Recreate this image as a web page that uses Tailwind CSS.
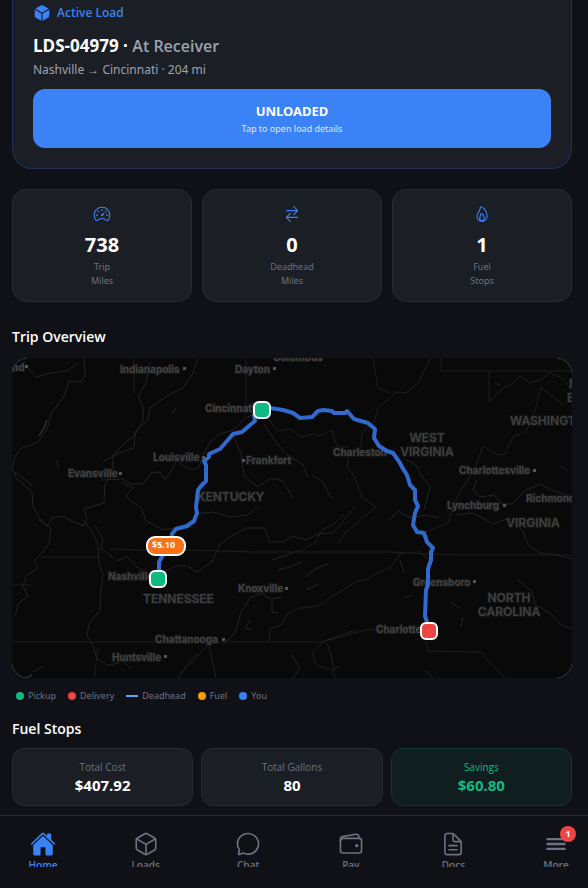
<!DOCTYPE html>
<html lang="en">
<head>
    <meta charset="UTF-8">
    <meta name="viewport" content="width=device-width, initial-scale=1">
    <title>Driver Home</title>
    <script src="https://cdn.jsdelivr.net/npm/@tailwindcss/browser@4"></script>
</head>
<body class="min-h-screen bg-[#101116] text-white font-['Open_Sans','Noto_Sans',sans-serif]">

<main class="pr-4 pb-20 pl-3">
    <!-- Active load -->
    <section class="rounded-b-[20px] border border-t-0 border-[#1f3255] bg-[#1b1e25] px-5 pt-1 pb-5">
        <div class="flex items-center gap-1.5 h-[18px] text-[#3b82f6]">
            <svg class="size-[18px]" viewBox="0 0 512 512" fill="currentColor"><path d="M440.9 136.3a4 4 0 000-6.91L288.16 40.65a64.14 64.14 0 00-64.33 0L71.12 129.39a4 4 0 000 6.91L254 243.88a4 4 0 004.06 0zM238 270.81L54 163.48a4 4 0 00-6 3.46v173.92a48 48 0 0023.84 41.39L234 479.48a4 4 0 006-3.46V274.27a4 4 0 00-2-3.46zM274 270.81a4 4 0 00-2 3.46V476a4 4 0 006 3.46l162.15-97.23A48 48 0 00464 340.86V167a4 4 0 00-6-3.46z"/></svg>
            <span class="text-[12px] font-semibold">Active Load</span>
        </div>
        <h1 class="mt-3 text-[17px] leading-6 font-bold">LDS-04979 · <span class="text-[16px] font-semibold text-[#9ca3af]">At Receiver</span></h1>
        <p class="font-['Noto_Sans',sans-serif] text-[12px] leading-[23px] text-[#9ca3af]">Nashville → Cincinnati · 204 mi</p>
        <button class="mt-2 flex h-[59px] w-full flex-col items-center justify-center rounded-xl bg-[#3b82f6]">
            <span class="font-['Noto_Sans',sans-serif] text-[13px] leading-5 font-bold">UNLOADED</span>
            <span class="font-['Noto_Sans',sans-serif] text-[9px] leading-4 text-white/80">Tap to open load details</span>
        </button>
    </section>

    <!-- Stats -->
    <section class="mt-5 grid grid-cols-3 gap-2.5 text-center">
        <div class="flex flex-col items-center rounded-[14px] border border-[#282b31] bg-[#1b1e25] pt-[15px] pb-[13px]">
            <svg class="size-[18px] text-[#3b82f6]" viewBox="0 0 512 512" fill="none" stroke="currentColor" stroke-width="32" stroke-linecap="round" stroke-linejoin="round"><path fill="currentColor" stroke="none" d="M326.1 231.9l-47.5 75.5a31 31 0 01-7 7 30.11 30.11 0 01-35-49l75.5-47.5a10.23 10.23 0 0111.7 0 10.06 10.06 0 012.3 14z"/><path d="M256 64C132.3 64 32 164.2 32 287.9a223.18 223.18 0 0056.3 148.5c1.1 1.2 2.1 2.4 3.2 3.5a25.19 25.19 0 0037.1-.1 173.13 173.13 0 01254.8 0 25.19 25.19 0 0037.1.1l3.2-3.5A223.18 223.18 0 00480 287.9C480 164.2 379.7 64 256 64zM256 128v32M416 288h-32M128 288H96M165.49 197.49l-22.63-22.63M346.51 197.49l22.63-22.63"/></svg>
            <b class="mt-2 mb-px text-[20px] leading-7 font-bold">738</b>
            <span class="font-['Noto_Sans',sans-serif] text-[9px] leading-[14px] text-[#6b7280]">Trip<br>Miles</span>
        </div>
        <div class="flex flex-col items-center rounded-[14px] border border-[#282b31] bg-[#1b1e25] pt-[15px] pb-[13px]">
            <svg class="size-[18px] text-[#3b82f6]" viewBox="0 0 512 512" fill="none" stroke="currentColor" stroke-width="32" stroke-linecap="round" stroke-linejoin="round"><path d="M304 48l112 112-112 112M398.87 160H96M208 464L96 352l112-112M114 352h302"/></svg>
            <b class="mt-2 mb-px text-[20px] leading-7 font-bold">0</b>
            <span class="font-['Noto_Sans',sans-serif] text-[9px] leading-[14px] text-[#6b7280]">Deadhead<br>Miles</span>
        </div>
        <div class="flex flex-col items-center rounded-[14px] border border-[#282b31] bg-[#1b1e25] pt-[15px] pb-[13px]">
            <svg class="size-[18px] text-[#3b82f6]" viewBox="0 0 512 512" fill="none" stroke="currentColor" stroke-width="32" stroke-linecap="round" stroke-linejoin="round"><path d="M112 320c0-93 124-165 96-272 66 0 192 96 192 272a144 144 0 01-288 0z"/><path d="M320 368c0 57.71-32 80-64 80s-64-22.29-64-80 40-86 32-128c42 0 96 70.29 96 128z"/></svg>
            <b class="mt-2 mb-px text-[20px] leading-7 font-bold">1</b>
            <span class="font-['Noto_Sans',sans-serif] text-[9px] leading-[14px] text-[#6b7280]">Fuel<br>Stops</span>
        </div>
    </section>

    <!-- Trip map -->
    <h2 class="mt-[25px] text-[14px] leading-5 font-semibold">Trip Overview</h2>
    <div class="mt-[11px] h-80 overflow-hidden rounded-2xl bg-[#dddddd]">
        <svg class="block h-full w-full bg-[#090909] font-[Inter,'Open_Sans',sans-serif]" viewBox="12 358 560 320" preserveAspectRatio="xMidYMid slice">
            <!-- state borders -->
            <g fill="none" stroke="#1f1f1f" stroke-width="1">
                <path d="M134 358v36M246 358v52M441 358v13h131M489 371v31M12 585h20M40 557h60M110 549l34 1 46 0 62 2 136 0 70 3 114 0M12 642h80l96 0 130 0 7-1 40-11 64-1M98 648l-4 30M209 645l7 33M428 651l52 1 25 26"/>
                <path d="M489 402l15-15 8-3 8-8 10 7 10-3 10-7 10 4 8 8 4 10M541 387l22 18M541 387l-5 20-10 25-13 5-8 17-7 1-15-9-8 22-14 22-9 18-3 14-11 5-12 5-4-3M388 400l8-8 10 1 12-10 8-16 5-9"/>
                <path d="M269 642l1-13 11-4 7-12 13-5 17-2 15-10 13-8 11-7 9-1 9-6 15-6 10-14 4 0M324 641l-12 12 4 12 17 6 2 7M324 641l20-7 12-4M426 641l2 10M298 552l17-9 7-13 12-6 10-10"/>
                <path d="M373 358l5 30 12 5M388 400l-10 8-4 14-12 10-1 15-12 7-2 12 8 12 7 19 14 10-30 25-8 12M349 447l-12 0-5-17-12 6-8-2-10 3-12-8-13 2-11-15"/>
            </g>
            <!-- rivers and lakes -->
            <g fill="none" stroke="#242424" stroke-width="1" stroke-linejoin="round">
                <path d="M84 358l1 18-4 6-12-1-5 15-13 18-4 16-10 13-15 5-7 8-3 12 4 10 16 14 1 15 7 12 7 7 5-8 10-2 10 5 12 5 3-7-3-10 20-6 1-20 8-9 0-19 12-12 10-8 8-14 0-14-5-10 8-14 4-21M20 365l8 3 8 9 14-4 17-2 11-8"/>
                <path d="M198 358l-6 17-9 13-15 7-18 13-2 12-13 12-1 16-17 6-14 8M101 480l22-1 8 5 12 0 8-11 9-1 5 8 8-12 4-8 8 7 8 3 6-3 4-12 8-14 8-7 15-4 11-12 7-3"/>
                <path d="M121 482l12 6-8 8 17 13 4 12 18 9 16-3 14 0M234 437l7 17 3 22 14 11 13-9 12 3 10 17M264 424l9 14 12 15 18 12 5 12M312 475l10 6 10 18M12 470l20 15M39 520l12 8-2 16-8 10-7 7 4 7-12 8-3 10 5 10-9 7-4 13M83 520l8 10 7 14 1 20 4 10-2 16-1 20-11 14-2 12 6 10 4 12 11 8 15-5 9 8M95 525l8 14-2 9 16 13 10-5 10 11 9 5M165 572l10-6 12 0 10 6 15-10 8-18 13-9 14-7 18 0 4 14 14 0 9-6 14 4 12-6 15-1 10-12 12-14"/>
                <path d="M190 665l12-14 8-8M178 678l11-16 8-8M223 645l12-12 6-21 10-15 10-4 10 6 10-2M272 600l0 12 7 1M250 620l-5 8 6 2M292 655l8 14-8 9M327 643l4 12 3 15 5-4M272 560l18-6 8-4M278 570l12-3 12-5M305 577l10-8 13-5M306 590l12-6"/>
                <path d="M477 480l-4 10 7 7 14-2 8 9 10 0 14-14 14-6 14 7 18 6M455 515l18-2 20 11 16-6 14 13 5 14 12 8 12 1 20 5M518 580l14 12 3 12 16 10 11 12 10 2M388 520l11-9 11 7 16-3 13 3M430 560l-13-10M424 510l6-23-9-12-5-10-11-6M400 560l4 13M450 602l10 6M463 617l-2 10M403 598l10-3M560 466l8 5M495 383l5 2M195 514l18-2 18 5 17-2 10-9M172 414l4-6M56 460l3 9M33 672l10-6M425 670l8 8"/>
            </g>
            <path d="M39 436l5-8 3-8M32 675l-6 3" stroke="#282828" stroke-width="2"/>
            <!-- place names -->
            <g fill="#434343" stroke="#161616" stroke-width="2" paint-order="stroke" font-size="10" font-weight="700">
                <text x="12" y="371">nd</text>
                <text x="120" y="373">Indianapolis</text>
                <text x="235" y="373">Dayton</text>
                <text x="273" y="361">Columbus</text>
                <text x="205" y="412">Cincinnati</text>
                <text x="153" y="461">Louisville</text>
                <text x="246" y="464">Frankfort</text>
                <text x="333" y="456">Charleston</text>
                <text x="68" y="477">Evansville</text>
                <text x="459" y="474">Charlottesville</text>
                <text x="447" y="509">Lynchburg</text>
                <text x="526" y="502">Richmond</text>
                <text x="108" y="580">Nashville</text>
                <text x="238" y="592">Knoxville</text>
                <text x="413" y="586">Greensboro</text>
                <text x="376" y="633">Charlotte</text>
                <text x="155" y="643">Chattanooga</text>
                <text x="112" y="661">Huntsville</text>
            </g>
            <g fill="#404040" stroke="#141414" stroke-width="2" paint-order="stroke" font-size="12" font-weight="600">
                <text x="510" y="425">WASHINGTON</text>
                <text x="569" y="388">M</text>
                <text x="567" y="402">B</text>
                <text x="427" y="442" text-anchor="middle">WEST</text>
                <text x="427" y="456" text-anchor="middle">VIRGINIA</text>
                <text x="197" y="501">KENTUCKY</text>
                <text x="533" y="527" text-anchor="middle">VIRGINIA</text>
                <text x="143" y="603">TENNESSEE</text>
                <text x="509" y="602" text-anchor="middle">NORTH</text>
                <text x="509" y="616" text-anchor="middle">CAROLINA</text>
            </g>
            <path fill="#555555" d="M25 365h3v3h-3zM183 367h3v3h-3zM273 367h3v3h-3zM202 456h3v3h-3zM242 459h3v3h-3zM119 472h3v3h-3zM533 469h3v3h-3zM503 504h3v3h-3zM285 587h3v3h-3zM473 580h3v3h-3zM222 638h3v3h-3zM164 655h3v3h-3z"/>
            <!-- route -->
            <polyline fill="none" stroke="#306ace" stroke-width="4" stroke-linecap="round" stroke-linejoin="round" points="158,579 159,570 159,562 163,555 171,541 172,534 176,529 187,526 194,521 197,513 196,507 198,490 201,486 206,481 206,465 204,461 209,457 209,454 220,449 233,434 242,432 250,425 255,421 254,415 262,408 270,408 283,410 293,413 300,418 312,417 318,411 323,410 332,411 334,413 345,413 347,411 354,419 368,423 375,429 374,438 379,446 387,451 393,453 400,463 402,467 407,475 410,485 415,490 415,500 418,506 415,513 413,525 417,532 424,533 427,542 433,548 431,552 431,560 428,569 428,585 426,590 425,616 428,625"/>
            <!-- markers -->
            <g stroke="#ffffff" stroke-width="2">
                <rect x="254" y="402" width="16" height="16" rx="5" fill="#10b981"/>
                <rect x="150" y="571" width="16" height="16" rx="5" fill="#10b981"/>
                <rect x="421" y="623" width="16" height="16" rx="5" fill="#ef4444"/>
                <rect x="147" y="537" width="38" height="18" rx="8" fill="#f97316"/>
            </g>
            <text x="152" y="548" fill="#ffffff" font-size="9" font-weight="700" font-family="Open Sans, sans-serif">$5.10</text>
        </svg>
    </div>
    <div class="mt-[9px] flex gap-3 px-1 font-['Noto_Sans',sans-serif] text-[9px] leading-[18px] text-[#6b7280]">
        <span class="flex items-center gap-1"><i class="size-2 rounded-full bg-[#10b981]"></i>Pickup</span>
        <span class="flex items-center gap-1"><i class="size-2 rounded-full bg-[#ef4444]"></i>Delivery</span>
        <span class="flex items-center gap-1"><i class="h-0.5 w-3 bg-[#60a5fa]"></i>Deadhead</span>
        <span class="flex items-center gap-1"><i class="size-2 rounded-full bg-[#f59e0b]"></i>Fuel</span>
        <span class="flex items-center gap-1"><i class="size-2 rounded-full bg-[#3b82f6]"></i>You</span>
    </div>

    <!-- Fuel stops -->
    <h2 class="mt-3.5 text-[14px] leading-5 font-semibold">Fuel Stops</h2>
    <section class="mt-[9px] grid grid-cols-3 gap-2 text-center">
        <div class="flex h-[58px] flex-col justify-center rounded-xl border border-[#282b31] bg-[#1b1e25]">
            <span class="text-[10px] leading-4 text-[#6b7280]">Total Cost</span>
            <b class="text-[15px] leading-5 font-bold">$407.92</b>
        </div>
        <div class="flex h-[58px] flex-col justify-center rounded-xl border border-[#282b31] bg-[#1b1e25]">
            <span class="text-[10px] leading-4 text-[#6b7280]">Total Gallons</span>
            <b class="text-[15px] leading-5 font-bold">80</b>
        </div>
        <div class="flex h-[58px] flex-col justify-center rounded-xl border border-[#10392f] bg-[#101e1f] text-[#10b981]">
            <span class="text-[10px] leading-4">Savings</span>
            <b class="text-[15px] leading-5 font-bold">$60.80</b>
        </div>
    </section>
</main>

<!-- Tab bar -->
<nav class="fixed inset-x-0 bottom-0 border-t border-[#282b31] bg-[#101116] pb-[21px]">
    <div class="flex h-[51px] justify-between overflow-hidden pt-[15px] pr-[5px] pl-4 text-[10px] leading-4 font-semibold text-[#6b7280]">
        <a href="#" class="flex w-[54px] shrink-0 flex-col items-center text-[#3b82f6]">
            <svg class="size-[26px] shrink-0" viewBox="0 0 512 512" fill="currentColor"><path d="M261.56 101.28a8 8 0 00-11.06 0L66.4 277.15a8 8 0 00-2.47 5.79L63.9 448a32 32 0 0032 32H192a16 16 0 0016-16V328a8 8 0 018-8h80a8 8 0 018 8v136a16 16 0 0016 16h96.06a32 32 0 0032-32V282.94a8 8 0 00-2.47-5.79z"/><path d="M490.91 244.15l-74.8-71.56V64a16 16 0 00-16-16h-48a16 16 0 00-16 16v32l-57.92-55.38C272.77 35.14 264.71 32 256 32c-8.68 0-16.72 3.14-22.14 8.63l-212.7 203.5c-6.22 6-7 15.87-1.34 22.37A16 16 0 0043 267.56L250.5 69.28a8 8 0 0111.06 0l207.52 198.28a16 16 0 0022.59-.44c6.14-6.36 5.63-16.86-.76-22.97z"/></svg>
            Home
        </a>
        <a href="#" class="flex w-[54px] shrink-0 flex-col items-center">
            <svg class="size-[26px] shrink-0" viewBox="0 0 512 512" fill="none" stroke="currentColor" stroke-width="32" stroke-linecap="round" stroke-linejoin="round"><path d="M448 341.37V170.61A32 32 0 00432.11 143l-152-88.46a47.94 47.94 0 00-48.24 0L79.89 143A32 32 0 0064 170.61v170.76A32 32 0 0079.89 369l152 88.46a48 48 0 0048.24 0l152-88.46A32 32 0 00448 341.37z"/><path d="M69 153.99l187 110 187-110M256 463.99v-200"/></svg>
            Loads
        </a>
        <a href="#" class="flex w-[54px] shrink-0 flex-col items-center">
            <svg class="size-[26px] shrink-0" viewBox="0 0 512 512" fill="none" stroke="currentColor" stroke-width="32" stroke-linecap="round" stroke-linejoin="round"><path d="M87.49 380c1.19-4.38-1.44-10.47-3.95-14.86a44.86 44.86 0 00-2.54-3.8 199.81 199.81 0 01-33-110C47.65 139.09 140.73 48 255.83 48 356.21 48 440 117.54 459.58 209.85a199 199 0 014.42 41.64c0 112.41-89.49 204.93-204.59 204.93-18.3 0-43-4.6-56.47-8.37s-26.92-8.77-30.39-10.11a31.09 31.09 0 00-11.12-2.07 30.71 30.71 0 00-12.09 2.43l-67.83 24.48a16 16 0 01-4.67 1.22 9.6 9.6 0 01-9.57-9.74 15.85 15.85 0 01.6-3.29z"/></svg>
            Chat
        </a>
        <a href="#" class="flex w-[54px] shrink-0 flex-col items-center">
            <svg class="size-[26px] shrink-0" viewBox="0 0 512 512" fill="none" stroke="currentColor" stroke-width="32" stroke-linecap="round" stroke-linejoin="round"><rect x="48" y="144" width="416" height="288" rx="48"/><path d="M411.36 144v-30A50 50 0 00352 64.9L88.64 109.85A50 50 0 0048 159v49"/><circle cx="368" cy="288" r="32" fill="currentColor" stroke="none"/></svg>
            Pay
        </a>
        <a href="#" class="flex w-[54px] shrink-0 flex-col items-center">
            <svg class="size-[26px] shrink-0" viewBox="0 0 512 512" fill="none" stroke="currentColor" stroke-width="32" stroke-linecap="round" stroke-linejoin="round"><path d="M416 221.25V416a48 48 0 01-48 48H144a48 48 0 01-48-48V96a48 48 0 0148-48h98.75a32 32 0 0122.62 9.37l141.26 141.26a32 32 0 019.37 22.62z"/><path d="M256 56v120a32 32 0 0032 32h120M176 288h160M176 368h160"/></svg>
            Docs
        </a>
        <a href="#" class="relative flex w-[54px] shrink-0 flex-col items-center">
            <svg class="size-[26px] shrink-0" viewBox="0 0 512 512" fill="none" stroke="currentColor" stroke-width="48" stroke-linecap="round"><path d="M88 160h336M88 256h336M88 352h336"/></svg>
            More
            <span class="absolute -top-[5px] right-[7px] size-4 rounded-full bg-[#ef4444] text-center text-[9px] leading-4 font-bold text-white">1</span>
        </a>
    </div>
</nav>

</body>
</html>
